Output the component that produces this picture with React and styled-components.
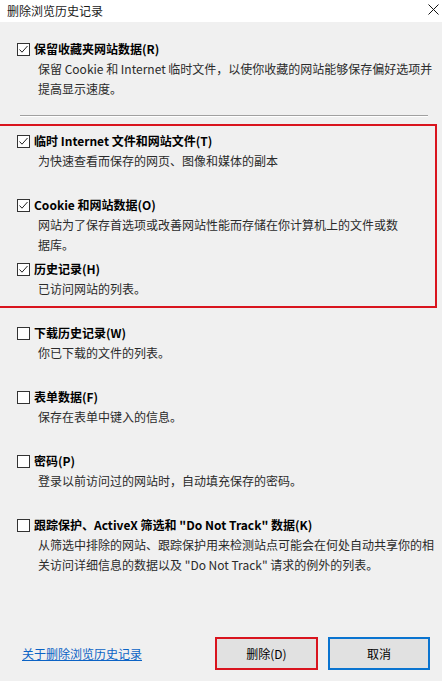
import React from 'react'
import styled, { createGlobalStyle } from 'styled-components'

const GlobalStyle = createGlobalStyle`
  html, body {
    margin: 0;
    padding: 0;
    background: #f0f0f0;
  }
  body {
    font-family: "Noto Sans CJK SC", "Noto Sans", sans-serif;
    font-size: 12px;
    color: #000;
  }
`

const Window = styled.div`
  width: 442px;
  height: 681px;
  background: #f0f0f0;
  display: flex;
  flex-direction: column;
  overflow: hidden;
`

const TitleBar = styled.div`
  height: 22px;
  background: #fff;
  display: flex;
  align-items: center;
  justify-content: space-between;
  padding: 0 3px 0 7px;
  flex-shrink: 0;
`

const Title = styled.span`
  font-size: 12px;
  line-height: 20px;
  color: #1a1a1a;
`

const CloseIcon = styled.svg`
  width: 11px;
  height: 11px;
  margin-top: -3px;
`

const Body = styled.div`
  padding-top: 18px;
  display: flex;
  flex-direction: column;
`

const Item = styled.div`
  display: flex;
  flex-direction: column;
  padding-left: 17px;
  height: ${p => (p.$fixed ? '64px' : 'auto')};
  box-sizing: border-box;
`

const LabelRow = styled.div`
  display: flex;
  align-items: center;
  gap: 4px;
  height: 18px;
`

const Box = styled.span`
  width: 13px;
  height: 13px;
  box-sizing: border-box;
  border: 1px solid #333;
  background: #fff;
  display: inline-flex;
  flex-shrink: 0;

  svg {
    width: 11px;
    height: 11px;
  }
`

const Label = styled.span`
  font-weight: 700;
  font-size: 12px;
  line-height: 18px;
  white-space: nowrap;
`

const Desc = styled.div`
  margin: 2px 0 0 21px;
  color: #2a2a2a;
  font-size: 12px;
  line-height: 18px;
  white-space: nowrap;
`

const Separator = styled.div`
  margin: 17px 14px 15px 20px;
  border-top: 1px solid #a0a0a0;
  border-bottom: 1px solid #fff;
`

const Highlight = styled.div`
  position: relative;

  &::after {
    content: '';
    position: absolute;
    top: -8px;
    left: -2px;
    right: 5px;
    bottom: 16px;
    border: 2px solid #d9141e;
    pointer-events: none;
  }
`

const Footer = styled.div`
  margin-top: 57px;
  height: 33px;
  display: flex;
  align-items: center;
  padding: 0 12px 0 22px;
  gap: 10px;
`

const HelpLink = styled.a`
  color: #0b63c5;
  text-decoration: underline;
  font-size: 12px;
  margin-right: auto;
  cursor: pointer;
`

const Button = styled.button`
  width: ${p => p.$width}px;
  height: 33px;
  box-sizing: border-box;
  background: #e1e1e1;
  border: 2px solid ${p => p.$border};
  font-family: inherit;
  font-size: 12px;
  color: #000;
  padding: 0;
`

const items = [
  {
    checked: true,
    label: '临时 Internet 文件和网站文件(T)',
    desc: ['为快速查看而保存的网页、图像和媒体的副本'],
  },
  {
    checked: true,
    label: 'Cookie 和网站数据(O)',
    desc: ['网站为了保存首选项或改善网站性能而存储在你计算机上的文件或数', '据库。'],
  },
  {
    checked: true,
    label: '历史记录(H)',
    desc: ['已访问网站的列表。'],
  },
]

const rest = [
  { checked: false, label: '下载历史记录(W)', desc: ['你已下载的文件的列表。'] },
  { checked: false, label: '表单数据(F)', desc: ['保存在表单中键入的信息。'] },
  { checked: false, label: '密码(P)', desc: ['登录以前访问过的网站时，自动填充保存的密码。'] },
  {
    checked: false,
    label: '跟踪保护、ActiveX 筛选和 "Do Not Track" 数据(K)',
    desc: [
      '从筛选中排除的网站、跟踪保护用来检测站点可能会在何处自动共享你的相',
      '关访问详细信息的数据以及 "Do Not Track" 请求的例外的列表。',
    ],
  },
]

const Checkbox = ({ checked }) => (
  <Box>
    {checked && (
      <svg viewBox="0 0 11 11">
        <polyline points="1.5,5.5 4,8.2 9.5,2" fill="none" stroke="#222" strokeWidth="1" />
      </svg>
    )}
  </Box>
)

const Option = ({ checked, label, desc, fixed }) => (
  <Item $fixed={fixed}>
    <LabelRow>
      <Checkbox checked={checked} />
      <Label>{label}</Label>
    </LabelRow>
    {desc.map(line => (
      <Desc key={line}>{line}</Desc>
    ))}
  </Item>
)

const App = () => (
  <Window>
    <GlobalStyle />
    <TitleBar>
      <Title>删除浏览历史记录</Title>
      <CloseIcon viewBox="0 0 11 11">
        <path d="M0.5 0.5 L10.5 10.5 M10.5 0.5 L0.5 10.5" stroke="#111" strokeWidth="1" />
      </CloseIcon>
    </TitleBar>
    <Body>
      <Option
        checked
        label="保留收藏夹网站数据(R)"
        desc={['保留 Cookie 和 Internet 临时文件，以使你收藏的网站能够保存偏好选项并', '提高显示速度。']}
      />
      <Separator />
      <Highlight>
        {items.map(item => (
          <Option key={item.label} fixed {...item} />
        ))}
      </Highlight>
      {rest.map(item => (
        <Option key={item.label} fixed {...item} />
      ))}
    </Body>
    <Footer>
      <HelpLink>关于删除浏览历史记录</HelpLink>
      <Button $width={103} $border="#d9141e">删除(D)</Button>
      <Button $width={102} $border="#0a74d0">取消</Button>
    </Footer>
  </Window>
)

export default App
